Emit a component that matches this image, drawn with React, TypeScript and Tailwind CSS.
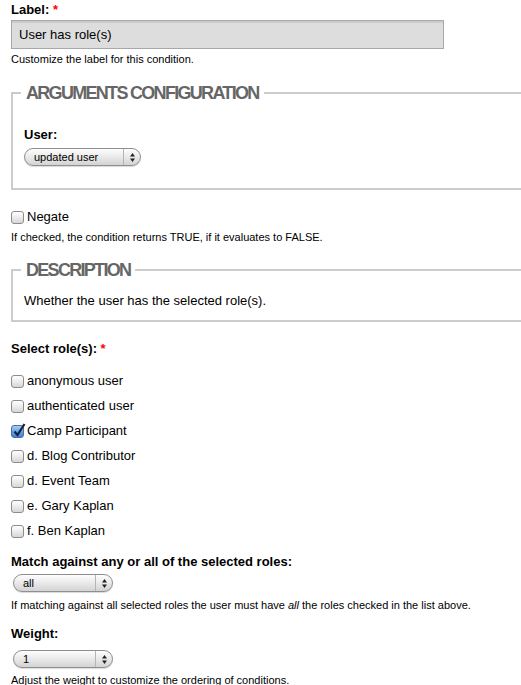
import React from "react";

type Role = { name: string; checked?: boolean };

const roles: Role[] = [
  { name: "anonymous user" },
  { name: "authenticated user" },
  { name: "Camp Participant", checked: true },
  { name: "d. Blog Contributor" },
  { name: "d. Event Team" },
  { name: "e. Gary Kaplan" },
  { name: "f. Ben Kaplan" },
];

// Aqua-style checkbox
function Checkbox({ checked }: { checked?: boolean }) {
  return (
    <span
      className={
        checked
          ? "relative inline-block h-[13px] w-[13px] shrink-0 rounded-[3px] border border-[#4a6fa8] bg-gradient-to-b from-[#a9ccf5] via-[#6ea2e6] to-[#3f7fd8]"
          : "relative inline-block h-[13px] w-[13px] shrink-0 rounded-[3px] border border-[#8c8c8c] bg-gradient-to-b from-[#ffffff] via-[#ececec] to-[#d6d6d6]"
      }
    >
      {checked && (
        <svg className="absolute -top-[3px] left-[1px]" width="13" height="14" viewBox="0 0 13 14">
          <path d="M1.5 8.5 L4.5 12 L11.5 1" fill="none" stroke="#10213f" strokeWidth="2.2" />
        </svg>
      )}
    </span>
  );
}

// Aqua-style popup button
function PopupSelect({ value, width }: { value: string; width: string }) {
  return (
    <div
      className={`flex h-[18px] items-stretch overflow-hidden rounded-[9px] border border-[#8f8f8f] bg-gradient-to-b from-[#fdfdfd] via-[#e9e9e9] to-[#d3d3d3] shadow-[0_1px_1px_rgba(0,0,0,0.15)] ${width}`}
    >
      <span className="flex flex-1 items-center pl-[9px] text-[11px] leading-none text-black">{value}</span>
      <span className="flex w-[17px] items-center justify-center border-l border-[#b5b5b5]">
        <svg width="5" height="9" viewBox="0 0 5 9">
          <path d="M2.5 0 L5 3.5 L0 3.5 Z" fill="#222" />
          <path d="M2.5 9 L5 5.5 L0 5.5 Z" fill="#222" />
        </svg>
      </span>
    </div>
  );
}

function Legend({ children }: { children: React.ReactNode }) {
  return (
    <legend className="ml-[-3px] px-[5px] text-[18px] leading-[20px] font-bold tracking-[-1.7px] text-[#666666]">
      {children}
    </legend>
  );
}

export default function App() {
  return (
    <div className="min-h-screen bg-white pt-[2px] pl-[11px] font-['Liberation_Sans',Arial,sans-serif] text-black">
      {/* label */}
      <div className="text-[13px] leading-[16px] font-bold">
        Label: <span className="text-[#ff0000]">*</span>
      </div>
      <div className="mt-[2px] flex h-[29px] w-[433px] items-center border border-[#a8a8a8] bg-[#dddddd] px-[7px] text-[13px] shadow-[inset_0_2px_0_rgba(0,0,0,0.08)]">
        User has role(s)
      </div>
      <p className="mt-[3px] text-[11px] leading-[14px]">Customize the label for this condition.</p>

      {/* arguments */}
      <fieldset className="mt-[17px] border-2 border-r-0 border-[#cccccc] pb-[22px] pl-[11px]">
        <Legend>ARGUMENTS CONFIGURATION</Legend>
        <div className="pt-[24px] text-[13px] leading-[16px] font-bold">User:</div>
        <div className="mt-[5px]">
          <PopupSelect value="updated user" width="w-[117px]" />
        </div>
      </fieldset>

      <label className="mt-[19px] flex h-[16px] items-center gap-[3px] text-[13px]">
        <Checkbox />
        Negate
      </label>
      <p className="mt-[5px] text-[11px] leading-[14px]">
        If checked, the condition returns TRUE, if it evaluates to FALSE.
      </p>

      {/* description */}
      <fieldset className="mt-[16px] border-2 border-r-0 border-[#cccccc] pb-[11px] pl-[11px]">
        <Legend>DESCRIPTION</Legend>
        <p className="pt-[13px] text-[13px] leading-[16px]">Whether the user has the selected role(s).</p>
      </fieldset>

      {/* roles */}
      <div className="mt-[19px] text-[13px] leading-[16px] font-bold">
        Select role(s): <span className="text-[#ff0000]">*</span>
      </div>
      <div className="mt-[16px] flex flex-col gap-[9px]">
        {roles.map((r) => (
          <label key={r.name} className="flex h-[16px] items-center gap-[3px] text-[13px]">
            <Checkbox checked={r.checked} />
            {r.name}
          </label>
        ))}
      </div>

      <div className="mt-[15px] text-[13px] leading-[16px] font-bold">
        Match against any or all of the selected roles:
      </div>
      <div className="mt-[4px] ml-[2px]">
        <PopupSelect value="all" width="w-[100px]" />
      </div>
      <p className="mt-[6px] text-[11px] leading-[14px]">
        If matching against all selected roles the user must have <em>all</em> the roles checked in the list above.
      </p>

      <div className="mt-[14px] text-[13px] leading-[16px] font-bold">Weight:</div>
      <div className="mt-[8px] ml-[2px]">
        <PopupSelect value="1" width="w-[100px]" />
      </div>
      <p className="mt-[5px] text-[11px] leading-[14px]">Adjust the weight to customize the ordering of conditions.</p>
    </div>
  );
}
